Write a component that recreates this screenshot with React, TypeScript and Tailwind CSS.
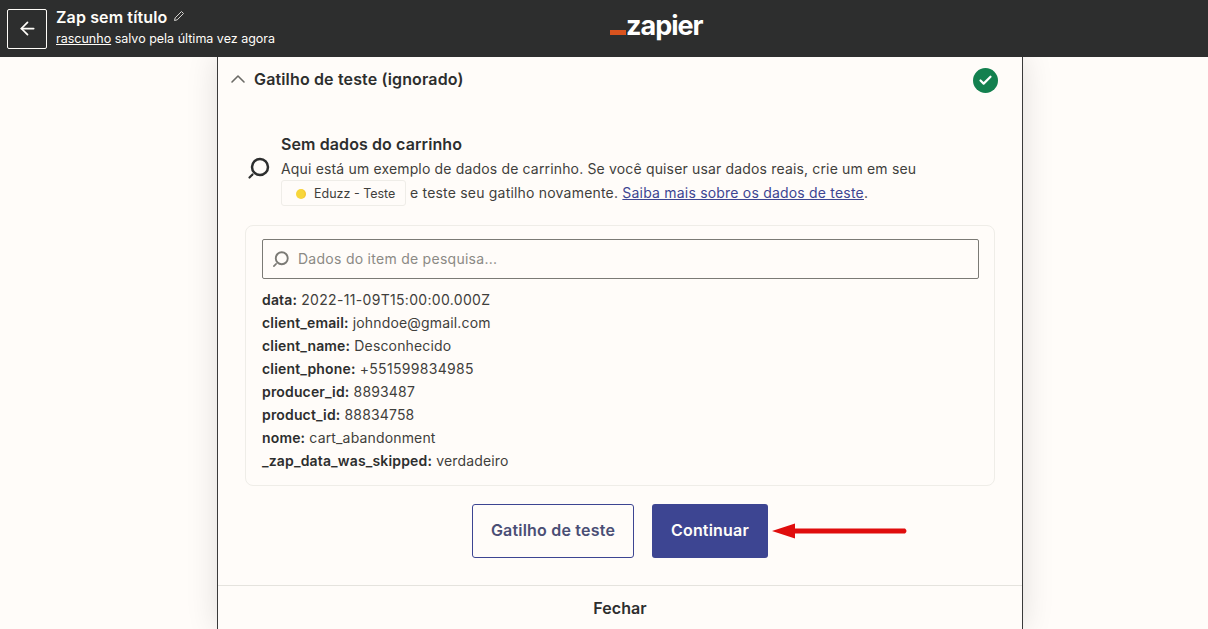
import { ArrowLeft, ChevronUp, Check } from "lucide-react"

const fields = [
  { label: "data:", value: "2022-11-09T15:00:00.000Z", wide: true },
  { label: "client_email:", value: "johndoe@gmail.com" },
  { label: "client_name:", value: "Desconhecido" },
  { label: "client_phone:", value: "+551599834985", wide: true },
  { label: "producer_id:", value: "8893487" },
  { label: "product_id:", value: "88834758" },
  { label: "nome:", value: "cart_abandonment" },
  { label: "_zap_data_was_skipped:", value: "verdadeiro" },
]

function SearchIcon({ className }: { className: string }) {
  return (
    <svg viewBox="0 0 24 24" fill="none" stroke="currentColor" className={className}>
      <circle cx="13" cy="11" r="8" strokeWidth="2.5" />
      <path d="M5.5 18.5 L2.5 21.5" strokeWidth="2.2" strokeLinecap="round" />
    </svg>
  )
}

export default function App() {
  return (
    <div className="h-[629px] overflow-hidden flex flex-col bg-[#fffcf9] font-['Inter',sans-serif] text-[#2d2e2e]">
      {/* Top bar */}
      <header className="relative z-10 h-[57px] shrink-0 bg-[#2d2e2e] flex items-center pl-[7px] text-[#fffdf9]">
        <button className="w-[40px] h-[40px] border border-[#fffdf9] rounded-[2px] flex items-center justify-center">
          <ArrowLeft className="w-[21px] h-[21px]" strokeWidth={2} />
        </button>
        <div className="ml-[9px] -mt-[2px]">
          <div className="flex items-center gap-[6px] text-[16px] tracking-[0.13px] leading-[20px] font-semibold">
            Zap sem título
            <svg viewBox="0 0 12 12" fill="none" stroke="currentColor" strokeWidth="1" className="w-[12px] h-[12px] opacity-80 -mt-[2px]">
              <path d="M1.5 10.5 L2.2 7.8 L8.5 1.5 L10.5 3.5 L4.2 9.8 Z" />
            </svg>
          </div>
          <div className="text-[12.5px] leading-[18px] mt-[3px]">
            <span className="underline">rascunho</span> salvo pela última vez agora
          </div>
        </div>
        {/* Logo */}
        <div className="absolute left-[610px] top-[10px] flex items-end">
          <span className="w-[16px] h-[5px] bg-[#d9531e] mb-[7px]" />
          <span className="text-[27px] leading-[32px] font-bold tracking-[-1px] text-white">zapier</span>
        </div>
      </header>

      {/* Panel */}
      <main className="relative w-[806px] ml-[217px] flex-1 flex flex-col border-x border-[#3a3a3a] shadow-[0_0_30px_rgba(0,0,0,0.12)] bg-[#fffcf9]">
        <div className="h-[46px] flex items-center pl-[8px] pr-[24px] justify-between">
          <div className="flex items-center gap-[4px] -mt-[2px]">
            <ChevronUp className="w-[24px] h-[24px] text-[#6b6a66]" strokeWidth={1.6} />
            <span className="text-[16px] tracking-[0.15px] font-semibold">Gatilho de teste (ignorado)</span>
          </div>
          <span className="w-[25px] h-[25px] rounded-full bg-[#13804f] flex items-center justify-center">
            <Check className="w-[15px] h-[15px] text-white" strokeWidth={3.5} />
          </span>
        </div>

        {/* Notice */}
        <div className="flex items-center mt-[31px] pl-[29px] pr-[28px]">
          <SearchIcon className="w-[24px] h-[24px] text-[#2d2e2e] shrink-0 -mt-[5px]" />
          <div className="ml-[10px]">
            <div className="text-[16px] tracking-[0.1px] leading-[20px] font-semibold">Sem dados do carrinho</div>
            <div className="text-[14px] tracking-[0.16px] leading-[24px] mt-[3px] text-[#3f3f3c]">
              Aqui está um exemplo de dados de carrinho. Se você quiser usar dados reais, crie um em seu
            </div>
            <div className="flex items-center text-[14px] tracking-[0.2px] text-[#3f3f3c] -mt-[1px]">
              <span className="h-[26px] w-[125px] border border-[#efede8] rounded-[3px] flex items-center pl-[14px] pt-[2px] text-[12.5px] tracking-normal">
                <span className="w-[10px] h-[10px] rounded-full bg-[radial-gradient(circle_at_35%_50%,#f7d63a_55%,#f2a91e_100%)] mr-[8px]" />
                Eduzz - Teste
              </span>
              <span className="ml-[4px] -mt-[2px]">
                e teste seu gatilho novamente.{" "}
                <span className="underline text-[#3d4592]">Saiba mais sobre os dados de teste</span>.
              </span>
            </div>
          </div>
        </div>

        {/* Data card */}
        <div className="mt-[19px] ml-[27px] mr-[27px] h-[261px] border border-[#efede8] rounded-[8px] pl-[16px] pr-[15px] pt-[13px]">
          <div className="h-[40px] border border-[#7b7a75] rounded-[2px] flex items-center pl-[9px] gap-[8px]">
            <SearchIcon className="w-[18px] h-[18px] text-[#7b7a75]" />
            <span className="text-[14px] tracking-[0.27px] text-[#8b8a85] pb-[2px]">Dados do item de pesquisa...</span>
          </div>
          <div className="mt-[9px] text-[14px] tracking-[0.16px] leading-[23px] text-[#3f3f3c]">
            {fields.map((f) => (
              <div key={f.label}>
                <span className="font-semibold text-[#2d2e2e]">{f.label}</span>{" "}
                <span className={f.wide ? "tracking-[0.32px]" : ""}>{f.value}</span>
              </div>
            ))}
          </div>
        </div>

        {/* Actions */}
        <div className="flex mt-[18px] ml-[254px] gap-[18px]">
          <button className="h-[54px] w-[162px] border border-[#3d4592] rounded-[3px] text-[16px] tracking-[0.2px] font-semibold text-[#4a4e75] pb-[2px]">
            Gatilho de teste
          </button>
          <button className="h-[54px] w-[116px] bg-[#3d4592] rounded-[3px] text-[16px] tracking-[0.2px] font-semibold text-[#fffdf9] pb-[2px]">
            Continuar
          </button>
        </div>

        <div className="mt-[27px] border-t border-[#e5e3de] h-[44px] flex items-center justify-center text-[16px] tracking-[0.1px] font-semibold">
          Fechar
        </div>

        {/* Annotation arrow */}
        <svg viewBox="0 0 136 16" className="absolute left-[554px] top-[466px] w-[136px] h-[16px]">
          <path d="M0 8 L23 0.5 L23 5.5 L133 5.5 Q136 8 133 10.5 L23 10.5 L23 15.5 Z" fill="#e00d0d" />
        </svg>
      </main>
    </div>
  )
}
